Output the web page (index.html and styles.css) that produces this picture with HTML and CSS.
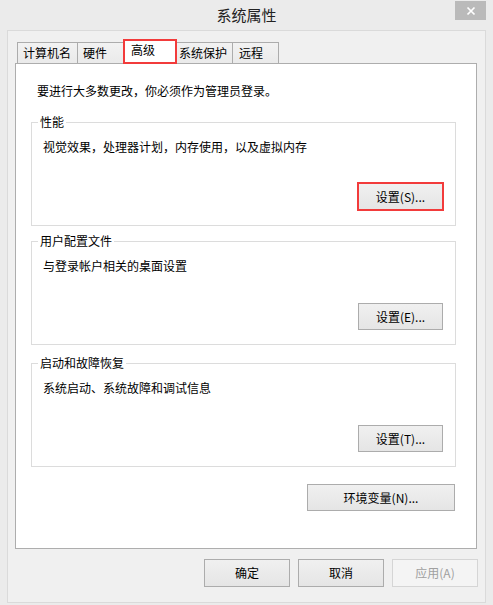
FILE: index.html
```html
<!DOCTYPE html>
<html lang="zh-CN">
<head>
<meta charset="utf-8">
<title>系统属性</title>
<link rel="stylesheet" href="styles.css">
</head>
<body>
<div class="window">
  <div class="titlebar">
    <div class="spacer"></div>
    <div class="title">系统属性</div>
    <div class="close"><svg width="10" height="10" viewBox="0 0 10 10"><path d="M1.5 1.5L8.5 8.5M8.5 1.5L1.5 8.5" stroke="#fff" stroke-width="1.7"/></svg></div>
  </div>
  <div class="client">
    <div class="tabs">
      <div class="tab t1">计算机名</div>
      <div class="tab t2">硬件</div>
      <div class="tab sel">高级</div>
      <div class="tab t4">系统保护</div>
      <div class="tab t5">远程</div>
    </div>
    <div class="pane">
      <p class="note">要进行大多数更改，你必须作为管理员登录。</p>
      <div class="group g1">
        <div class="legend">性能</div>
        <div class="desc">视觉效果，处理器计划，内存使用，以及虚拟内存</div>
        <button class="btn gbtn hl">设置(S)...</button>
      </div>
      <div class="group g2">
        <div class="legend">用户配置文件</div>
        <div class="desc">与登录帐户相关的桌面设置</div>
        <button class="btn gbtn">设置(E)...</button>
      </div>
      <div class="group g3">
        <div class="legend">启动和故障恢复</div>
        <div class="desc">系统启动、系统故障和调试信息</div>
        <button class="btn gbtn">设置(T)...</button>
      </div>
      <button class="btn env">环境变量(N)...</button>
    </div>
    <div class="actions">
      <button class="btn act">确定</button>
      <button class="btn act">取消</button>
      <button class="btn act" disabled>应用(A)</button>
    </div>
  </div>
</div>
</body>
</html>
```

FILE: styles.css
```css
* { box-sizing: border-box; }
html, body { margin: 0; padding: 0; }
body {
  width: 493px;
  height: 605px;
  overflow: hidden;
  background: #ebebeb;
  font-family: "Noto Sans CJK SC", "Microsoft YaHei", sans-serif;
  font-size: 12px;
  color: #111;
}
.window {
  height: 605px;
  display: flex;
  flex-direction: column;
}
.titlebar {
  height: 30px;
  display: grid;
  grid-template-columns: 1fr auto 1fr;
  align-items: start;
}
.title {
  font-size: 15px;
  line-height: 20px;
  margin-top: 5px;
  color: #222;
}
.close {
  justify-self: end;
  width: 31px;
  height: 19px;
  margin: 1px 7px 0 0;
  background: #bababa;
  display: flex;
  align-items: center;
  justify-content: center;
}
.client {
  margin: 0 7px;
  height: 573px;
  background: #f0f0f0;
  border: 1px solid #dadada;
  padding: 8px 8px 0 7px;
  display: flex;
  flex-direction: column;
}
.tabs {
  display: flex;
  align-items: flex-end;
  margin-left: 2px;
}
.tab {
  height: 21px;
  border: 1px solid #acacac;
  border-bottom: none;
  background: linear-gradient(#f2f2f2, #eaeaea);
  line-height: 16px;
  display: flex;
  align-items: center;
  padding-left: 5px;
  margin-left: -1px;
  color: #000;
}
.t1 { width: 61px; margin-left: 0; }
.t2 { width: 47px; }
.t4 { width: 57px; padding-left: 2px; }
.t5 { width: 47px; padding-left: 6px; }
.tab.sel {
  position: relative;
  z-index: 2;
  width: 54px;
  height: 25px;
  margin-bottom: -1px;
  border: 2px solid #f23b3b;
  background: #fff;
  align-items: flex-start;
  padding: 1px 0 0 6px;
}
.pane {
  height: 486px;
  background: #fff;
  border: 1px solid #adadad;
  padding: 18px 20px 0 15px;
  display: flex;
  flex-direction: column;
}
.note {
  margin: 0 0 0 6px;
  line-height: 18px;
  color: #000;
}
.group {
  height: 104px;
  border: 1px solid #dcdcdc;
  display: flex;
  flex-direction: column;
  padding-left: 11px;
}
.g1 { margin-top: 22px; }
.g2 { margin-top: 15px; }
.g3 { margin-top: 18px; }
.legend {
  align-self: flex-start;
  margin: -9px 0 0 -5px;
  padding: 0 2px;
  background: #fff;
  line-height: 16px;
  color: #000;
}
.desc {
  margin-top: 8px;
  line-height: 18px;
  color: #000;
}
.btn {
  font-family: inherit;
  font-size: 12px;
  color: #000;
  border: 1px solid #acacac;
  background: linear-gradient(#f0f0f0, #e5e5e5);
  padding: 0;
  line-height: 16px;
  border-radius: 0;
}
.gbtn {
  align-self: flex-end;
  width: 85px;
  height: 27px;
  margin: 28px 12px 0 0;
}
.gbtn.hl {
  margin-top: 27px;
  outline: 2px solid #f23b3b;
  outline-offset: -1px;
}
.env {
  align-self: flex-end;
  width: 148px;
  height: 27px;
  margin: 17px 1px 0 0;
}
.actions {
  display: flex;
  justify-content: flex-end;
  gap: 8px;
  margin: 10px -1px 0 0;
}
.act {
  width: 86px;
  height: 28px;
}
.act:disabled {
  border-color: #d5d5d5;
  background: #f4f4f4;
  color: #a0a0a0;
}
```
